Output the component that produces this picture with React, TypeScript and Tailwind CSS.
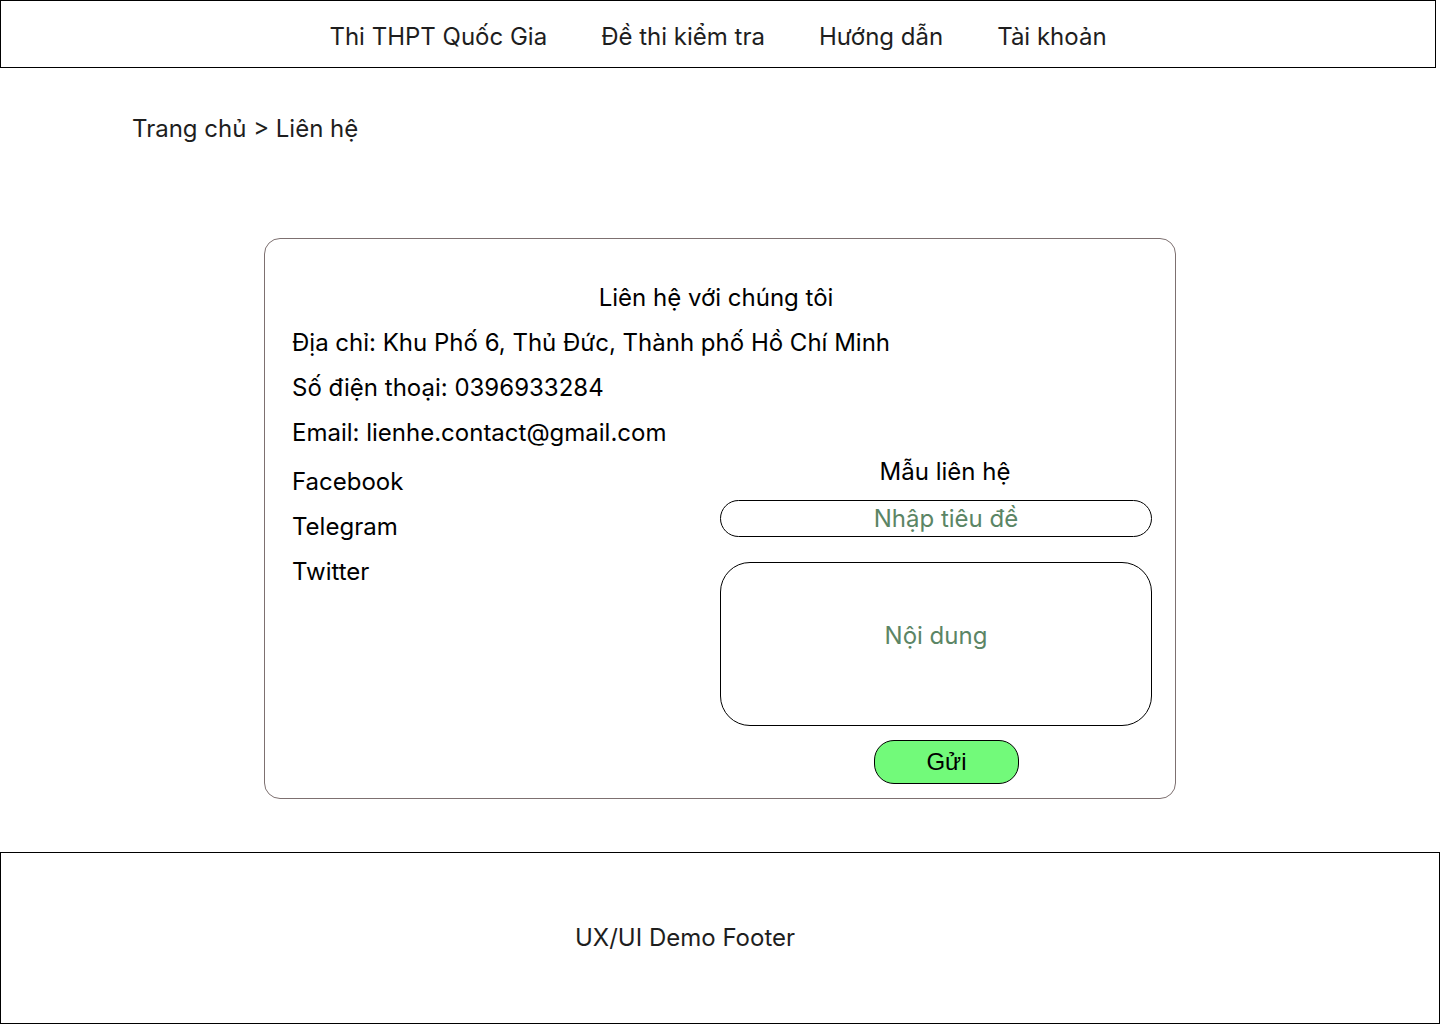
const navItems = ["Thi THPT Quốc Gia", "Đề thi kiểm tra", "Hướng dẫn", "Tài khoản"];

const App = () => {
    return (
        <div className="min-h-[1024px] bg-white font-['Inter','Noto_Sans',sans-serif] text-black">
            <header className="flex h-[68px] w-[1436px] items-center justify-center gap-[54px] border border-black pt-[6px] text-[24px] text-[#1e1e1e]">
                {navItems.map((item) => (
                    <a key={item} href="#" className="leading-none">
                        {item}
                    </a>
                ))}
            </header>

            <nav className="pl-[132px] pt-[47px] text-[24px] leading-[28px] text-[#1e1e1e]">
                Trang chủ &gt; Liên hệ
            </nav>

            <section className="mx-auto mt-[95px] flex w-[912px] flex-col rounded-[16px] border border-[#7d7070] pb-[14px] pl-[27px] pr-[23px] pt-[36px] text-[24px]">
                <p className="pr-[12px] text-center leading-[45px]">Liên hệ với chúng tôi</p>
                <p className="leading-[45px]">Địa chỉ: Khu Phố 6, Thủ Đức, Thành phố Hồ Chí Minh</p>
                <p className="leading-[45px]">Số điện thoại: 0396933284</p>
                <p className="leading-[45px]">Email: lienhe.contact@gmail.com</p>

                <div className="flex">
                    <div className="flex flex-1 flex-col pt-[4px]">
                        <a href="#" className="leading-[45px]">Facebook</a>
                        <a href="#" className="leading-[45px]">Telegram</a>
                        <a href="#" className="leading-[45px]">Twitter</a>
                    </div>
                    <form className="flex w-[432px] flex-col">
                        <p className="h-[34px] pl-[18px] text-center leading-[34px]">Mẫu liên hệ</p>
                        <input
                            type="text"
                            placeholder="Nhập tiêu đề"
                            className="mt-[11px] h-[37px] rounded-full border border-black pl-[20px] text-center text-[24px] outline-none placeholder:text-[#5b8565]"
                        />
                        <div className="mt-[25px] flex h-[164px] justify-center rounded-[30px] border border-black pt-[55px] text-[#5b8565]">
                            <span className="leading-[36px]">Nội dung</span>
                        </div>
                        <button
                            type="button"
                            className="ml-[154px] mt-[14px] h-[44px] w-[145px] rounded-[20px] border border-black bg-[#72fa7a] font-['Liberation_Sans',Arial,sans-serif] text-[24px] leading-none text-black"
                        >
                            Gửi
                        </button>
                    </form>
                </div>
            </section>

            <footer className="mt-[53px] flex h-[172px] items-center justify-center border border-black pr-[70px] text-[24px] text-[#1e1e1e]">
                UX/UI Demo Footer
            </footer>
        </div>
    );
};

export default App;
